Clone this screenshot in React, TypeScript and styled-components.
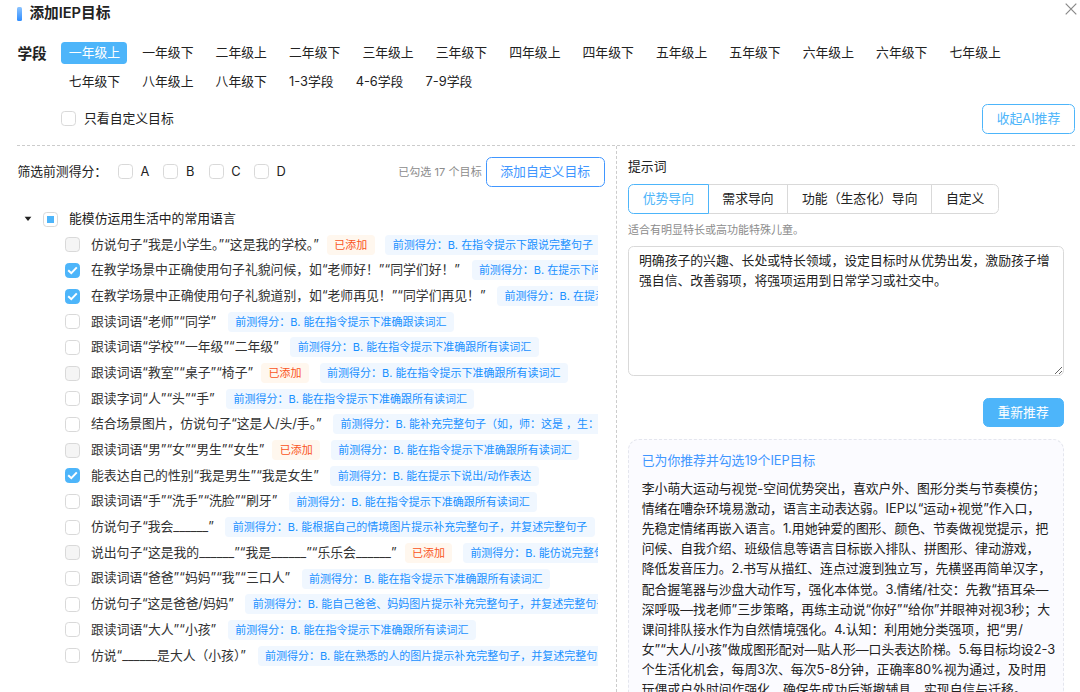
import React from "react";
import styled, { createGlobalStyle, css } from "styled-components";

const GlobalStyle = createGlobalStyle`
  * { box-sizing: border-box; }
  body {
    margin: 0;
    background: #fff;
    color: #222;
    font-family: Inter, "Noto Sans CJK SC", sans-serif;
    font-size: 12.83px;
    line-height: 20.17px;
    text-spacing-trim: space-all;
    overflow: hidden;
  }
`;

const Dialog = styled.div`
  width: 1080px;
  height: 692px;
  padding: 0 5px 0 17.4px;
  overflow: hidden;
  display: flex;
  flex-direction: column;
`;

const Header = styled.header`
  height: 28px;
  flex: none;
  display: flex;
  align-items: flex-start;
  justify-content: space-between;
`;

const Title = styled.h1`
  margin: 0;
  height: 27px;
  display: flex;
  align-items: center;
  gap: 7.4px;
  font-size: 14.67px;
  font-weight: 600;

  &::before {
    content: "";
    width: 4.6px;
    height: 14px;
    border-radius: 1.5px;
    background: linear-gradient(#8cc4ff, #2f8dff);
  }
`;

const CloseIcon = styled.svg`
  width: 12px;
  height: 12px;
  margin: 3px -1.5px 0 0;
`;

const StageSection = styled.section`
  height: 64px;
  flex: none;
  padding-top: 14px;
  display: flex;
`;

const StageLabel = styled.div`
  width: 44.1px;
  flex: none;
  font-size: 14.67px;
  font-weight: 600;
  line-height: 24px;
`;

const StageList = styled.div`
  flex: 1;
  display: flex;
  flex-wrap: wrap;
  align-content: flex-start;
  gap: 7.33px 7.43px;
`;

const Stage = styled.button<{ $active?: boolean }>`
  height: 22px;
  padding: 0 7.33px 1px;
  border: 0;
  border-radius: 3.7px;
  background: ${(p) => (p.$active ? "#4db5fa" : "transparent")};
  color: ${(p) => (p.$active ? "#fff" : "#222")};
  font: inherit;
  line-height: 20px;
  white-space: nowrap;
`;

const CustomRow = styled.div`
  height: 54px;
  flex: none;
  padding: 1px 0 0 44.1px;
  display: flex;
  align-items: center;
  justify-content: space-between;
  border-bottom: 1px dashed #ccc;
`;

const CheckLabel = styled.label`
  display: flex;
  align-items: center;
  gap: 7.5px;
`;

const Box = styled.span<{ $state?: string }>`
  width: 15px;
  height: 15px;
  flex: none;
  display: inline-flex;
  align-items: center;
  justify-content: center;
  border: 1px solid #d9d9d9;
  border-radius: 3.7px;
  background: #fff;
  ${(p) => p.$state === "disabled" && css`background: #f5f5f5;`}
  ${(p) => p.$state === "checked" && css`background: #4db5fa; border-color: #4db5fa;`}

  i {
    width: 7px;
    height: 7px;
    background: #4db5fa;
  }
`;

const Button = styled.button<{ $tone?: "sky" | "blue" | "solid" }>`
  height: 29.33px;
  padding: 0 13.75px;
  flex: none;
  border: 1px solid ${(p) => (p.$tone === "blue" ? "#4096ff" : "#4db5fa")};
  border-radius: 5.5px;
  background: ${(p) => (p.$tone === "solid" ? "#4db5fa" : "#fff")};
  color: ${(p) => (p.$tone === "solid" ? "#fff" : p.$tone === "blue" ? "#4096ff" : "#4db5fa")};
  font: inherit;
  line-height: 27px;
  white-space: nowrap;
`;

const Columns = styled.main`
  flex: 1;
  min-height: 0;
  display: flex;
`;

const LeftPane = styled.section`
  width: 599.6px;
  flex: none;
  border-right: 1px dashed #ccc;
`;

const FilterRow = styled.div`
  height: 52px;
  display: flex;
  align-items: center;
  padding-right: 11.2px;
`;

const FilterTitle = styled.span`
  width: 100.7px;
`;

const Grades = styled.div`
  display: flex;
  flex: 1;
`;

const Grade = styled(CheckLabel)`
  width: 45.3px;
`;

const Count = styled.span`
  margin-right: 3.8px;
  font-size: 11px;
  color: #8c8c8c;
  letter-spacing: 0.06px;
`;

const Tree = styled.div`
  width: 580.2px;
  padding-top: 8.3px;
  overflow: hidden;
`;

const TreeHead = styled.div`
  height: 25.5px;
  display: flex;
  align-items: center;
  padding-left: 6.8px;
`;

const Caret = styled.svg`
  width: 8px;
  height: 6px;
  margin-right: 10.8px;
`;

const HeadText = styled.span`
  margin-left: 11px;
`;

const Goal = styled.div`
  height: 25.7px;
  padding-left: 47.6px;
  display: flex;
  align-items: center;
  white-space: nowrap;
`;

const GoalName = styled.span<{ $spacing?: number }>`
  margin-left: 11px;
  flex: none;
  color: #333;
  letter-spacing: ${(p) => p.$spacing ?? 0}px;
`;

const HalfWidth = styled.span`
  letter-spacing: -0.5em;
`;

const Tag = styled.span<{ $added?: boolean }>`
  height: 20px;
  flex: none;
  margin-left: ${(p) => (p.$added ? 8 : 11.6)}px;
  padding: 0 7.33px;
  border-radius: 3.7px;
  background: ${(p) => (p.$added ? "#fff7ee" : "#f0f7ff")};
  color: ${(p) => (p.$added ? "#fa541c" : "#1890ff")};
  font-size: 11px;
  line-height: 20.3px;

  & + & {
    margin-left: 10.8px;
  }
`;

const RightPane = styled.section`
  flex: 1;
  padding: 11px 11.5px 0 11px;
  display: flex;
  flex-direction: column;
`;

const Segments = styled.div`
  display: flex;
  margin-top: 7px;
`;

const Segment = styled.button<{ $active?: boolean }>`
  height: 29.33px;
  padding: 0 13.7px;
  margin-right: -1px;
  border: 1px solid ${(p) => (p.$active ? "#4db5fa" : "#d9d9d9")};
  background: #fff;
  color: ${(p) => (p.$active ? "#4db5fa" : "#222")};
  font: inherit;
  line-height: 27px;
  z-index: ${(p) => (p.$active ? 1 : 0)};

  &:first-child { border-radius: 5.5px 0 0 5.5px; }
  &:last-child { border-radius: 0 5.5px 5.5px 0; }
`;

const Hint = styled.p`
  margin: 6.6px 0 5.5px;
  font-size: 11px;
  color: #8c8c8c;
`;

const Prompt = styled.textarea`
  width: 100%;
  height: 130px;
  flex: none;
  padding: 4.4px 10px;
  border: 1px solid #d9d9d9;
  border-radius: 5.5px;
  background: #fff;
  color: #222;
  font: inherit;
  resize: vertical;
  outline: none;
`;

const Actions = styled.div`
  display: flex;
  justify-content: flex-end;
  margin: 22px 0 11.7px;
`;

const Summary = styled.article`
  flex: 1;
  padding: 11px 0 0 12.8px;
  border: 1px dashed #e4e6ee;
  border-bottom: 0;
  border-radius: 11px 11px 0 0;
  background: #fbfbff;
  white-space: nowrap;
  overflow: hidden;
`;

const SummaryTitle = styled.div`
  margin-bottom: 7.7px;
  color: #4096ff;
`;

const stages = [
  "一年级上", "一年级下", "二年级上", "二年级下", "三年级上", "三年级下", "四年级上",
  "四年级下", "五年级上", "五年级下", "六年级上", "六年级下", "七年级上", "七年级下",
  "八年级上", "八年级下", "1-3学段", "4-6学段", "7-9学段",
];

type GoalItem = { name: string; score: string; state?: "disabled" | "checked"; spacing?: number };

const goals: GoalItem[] = [
  { name: "仿说句子“我是小学生。”“这是我的学校。”", score: "在指令提示下跟说完整句子", state: "disabled" },
  { name: "在教学场景中正确使用句子礼貌问候，如“老师好！”“同学们好！”", score: "在提示下问候他人", state: "checked" },
  { name: "在教学场景中正确使用句子礼貌道别，如“老师再见！”“同学们再见！”", score: "在提示下道别", state: "checked" },
  { name: "跟读词语“老师”“同学”", score: "能在指令提示下准确跟读词汇" },
  { name: "跟读词语“学校”“一年级”“二年级”", score: "能在指令提示下准确跟所有读词汇" },
  { name: "跟读词语“教室”“桌子”“椅子”", score: "能在指令提示下准确跟所有读词汇", state: "disabled" },
  { name: "跟读字词“人”“头”“手”", score: "能在指令提示下准确跟所有读词汇" },
  { name: "结合场景图片，仿说句子“这是人/头/手。”", score: "能补充完整句子（如，师：这是 ，生：人）", spacing: -0.08 },
  { name: "跟读词语“男”“女”“男生”“女生”", score: "能在指令提示下准确跟所有读词汇", state: "disabled" },
  { name: "能表达自己的性别“我是男生”“我是女生”", score: "能在提示下说出/动作表达", state: "checked" },
  { name: "跟读词语“手”“洗手”“洗脸”“刷牙”", score: "能在指令提示下准确跟所有读词汇" },
  { name: "仿说句子“我会______”", score: "能根据自己的情境图片提示补充完整句子，并复述完整句子", spacing: -0.04 },
  { name: "说出句子“这是我的______”“我是______”“乐乐会______”", score: "能仿说完整句子", state: "disabled", spacing: -0.01 },
  { name: "跟读词语“爸爸”“妈妈”“我”“三口人”", score: "能在指令提示下准确跟所有读词汇" },
  { name: "仿说句子“这是爸爸/妈妈”", score: "能自己爸爸、妈妈图片提示补充完整句子，并复述完整句子", spacing: -0.1 },
  { name: "跟读词语“大人”“小孩”", score: "能在指令提示下准确跟所有读词汇" },
  { name: "仿说“______是大人（小孩）”", score: "能在熟悉的人的图片提示补充完整句子，并复述完整句子", spacing: -0.03 },
];

const summary = [
  "李小萌大运动与视觉-空间优势突出，喜欢户外、图形分类与节奏模仿；",
  "情绪在嘈杂环境易激动，语言主动表达弱。IEP以“运动+视觉”作入口，",
  "先稳定情绪再嵌入语言。1.用她钟爱的图形、颜色、节奏做视觉提示，把",
  "问候、自我介绍、班级信息等语言目标嵌入排队、拼图形、律动游戏，",
  "降低发音压力。2.书写从描红、连点过渡到独立写，先横竖再简单汉字，",
  "配合握笔器与沙盘大动作写，强化本体觉。3.情绪/社交：先教“捂耳朵—",
  "深呼吸—找老师”三步策略，再练主动说“你好”“给你”并眼神对视3秒；大",
  "课间排队接水作为自然情境强化。4.认知：利用她分类强项，把“男/",
  "女”“大人/小孩”做成图形配对—贴人形—口头表达阶梯。5.每目标均设2-3",
  "个生活化机会，每周3次、每次5-8分钟，正确率80%视为通过，及时用",
  "玩偶或户外时间作强化，确保先成功后渐撤辅具，实现自信与迁移。",
];

function Checkbox({ state }: { state?: string }) {
  return (
    <Box $state={state}>
      {state === "checked" && (
        <svg width="11" height="9" viewBox="0 0 11 9" fill="none" stroke="#fff" strokeWidth="2">
          <path d="M1.2 4.2 4.3 7.2 9.8 1.4" />
        </svg>
      )}
      {state === "partial" && <i />}
    </Box>
  );
}

// Full-width closing punctuation takes half its width before a closing quote.
function Punctuated({ text }: { text: string }) {
  return (
    <>
      {text.split(/([。）](?=”))/).map((part, i) =>
        i % 2 ? <HalfWidth key={i}>{part}</HalfWidth> : part,
      )}
    </>
  );
}

export default function App() {
  return (
    <>
      <GlobalStyle />
      <Dialog>
        <Header>
          <Title>添加IEP目标</Title>
          <CloseIcon viewBox="0 0 12 12" fill="none" stroke="#888" strokeWidth="1.2">
            <path d="M.7 .7 11.3 11.3M11.3 .7 .7 11.3" />
          </CloseIcon>
        </Header>

        <StageSection>
          <StageLabel>学段</StageLabel>
          <StageList>
            {stages.map((s, i) => (
              <Stage key={s} $active={i === 0}>{s}</Stage>
            ))}
          </StageList>
        </StageSection>

        <CustomRow>
          <CheckLabel><Checkbox />只看自定义目标</CheckLabel>
          <Button $tone="sky">收起AI推荐</Button>
        </CustomRow>

        <Columns>
          <LeftPane>
            <FilterRow>
              <FilterTitle>筛选前测得分：</FilterTitle>
              <Grades>
                {["A", "B", "C", "D"].map((g) => (
                  <Grade key={g}><Checkbox />{g}</Grade>
                ))}
              </Grades>
              <Count>已勾选 17 个目标</Count>
              <Button $tone="blue">添加自定义目标</Button>
            </FilterRow>
            <Tree>
              <TreeHead>
                <Caret viewBox="0 0 8 6"><path d="M.6 .8h6.8L4 5z" fill="#222" /></Caret>
                <Checkbox state="partial" />
                <HeadText>能模仿运用生活中的常用语言</HeadText>
              </TreeHead>
              {goals.map((g) => (
                <Goal key={g.name}>
                  <Checkbox state={g.state} />
                  <GoalName $spacing={g.spacing}><Punctuated text={g.name} /></GoalName>
                  {g.state === "disabled" && <Tag $added>已添加</Tag>}
                  <Tag>前测得分：B. {g.score}</Tag>
                </Goal>
              ))}
            </Tree>
          </LeftPane>

          <RightPane>
            <div>提示词</div>
            <Segments>
              {["优势导向", "需求导向", "功能（生态化）导向", "自定义"].map((s, i) => (
                <Segment key={s} $active={i === 0}>{s}</Segment>
              ))}
            </Segments>
            <Hint>适合有明显特长或高功能特殊儿童。</Hint>
            <Prompt defaultValue="明确孩子的兴趣、长处或特长领域，设定目标时从优势出发，激励孩子增强自信、改善弱项，将强项运用到日常学习或社交中。" />
            <Actions><Button $tone="solid">重新推荐</Button></Actions>
            <Summary>
              <SummaryTitle>已为你推荐并勾选19个IEP目标</SummaryTitle>
              {summary.map((line) => <div key={line}>{line}</div>)}
            </Summary>
          </RightPane>
        </Columns>
      </Dialog>
    </>
  );
}
